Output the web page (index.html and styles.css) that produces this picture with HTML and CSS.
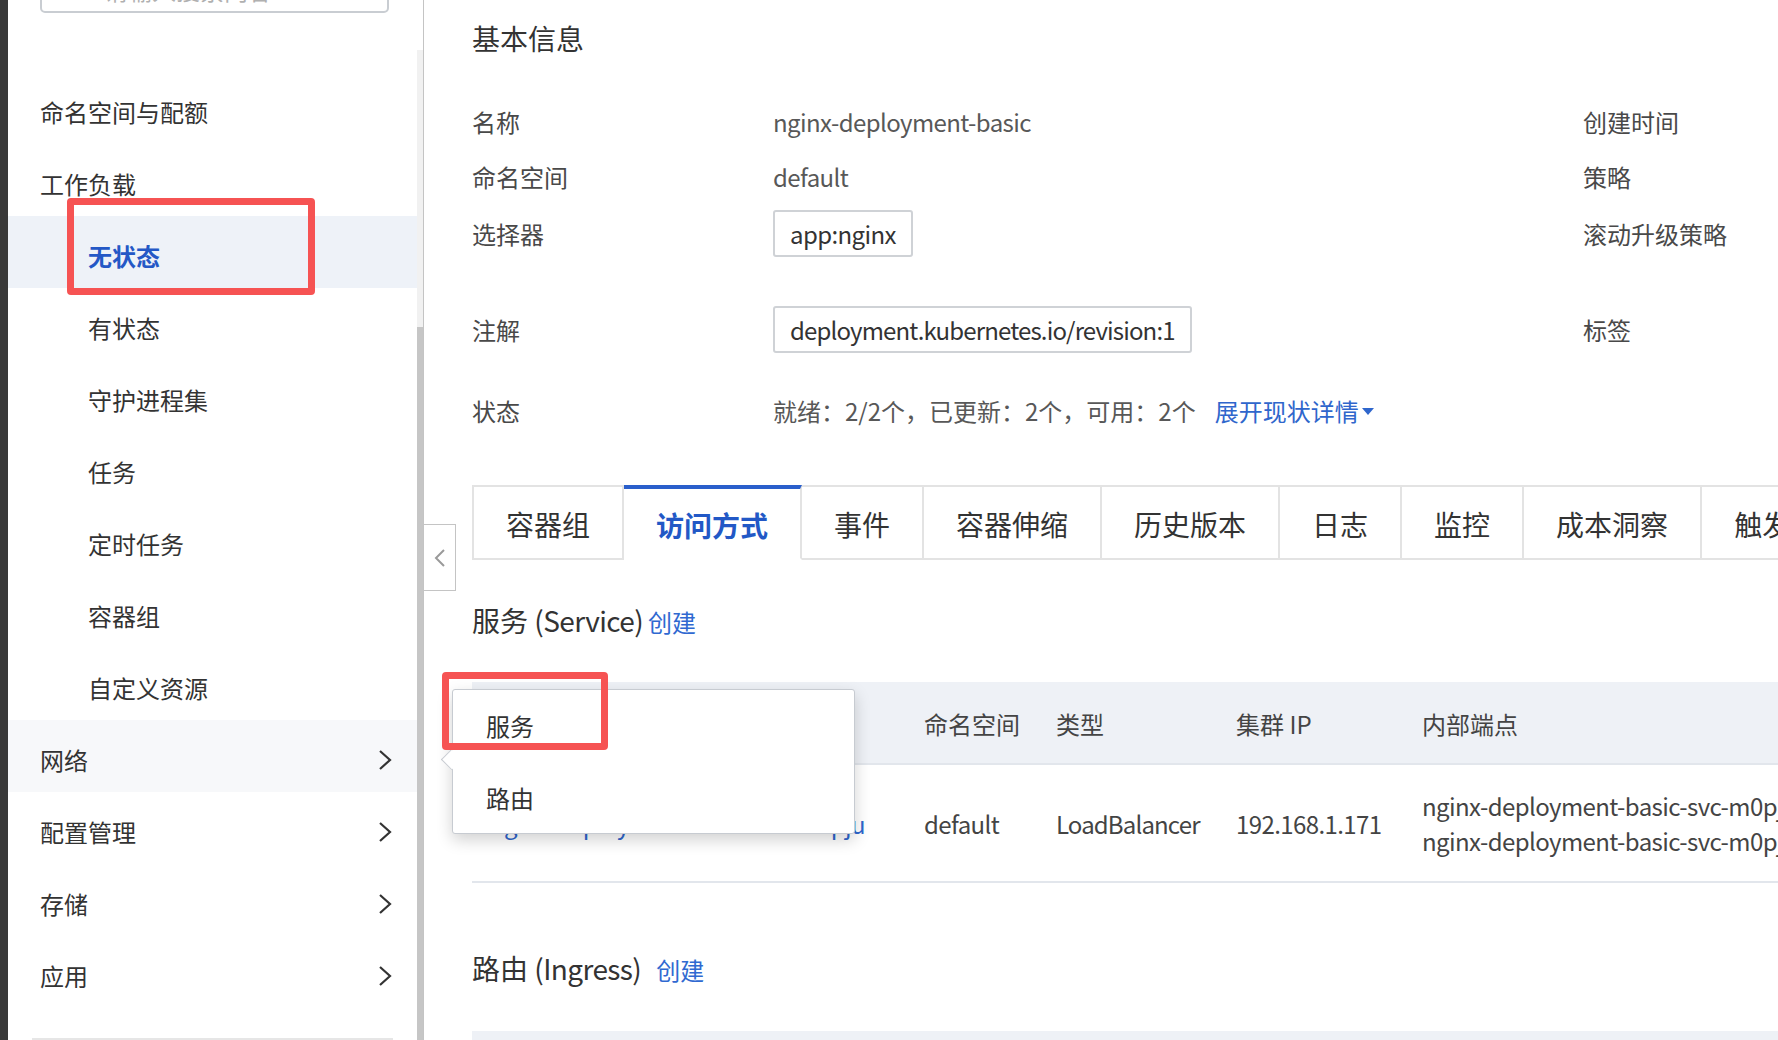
FILE: index.html
```html
<!DOCTYPE html>
<html lang="zh-CN">
<head>
<meta charset="utf-8">
<title>nginx-deployment-basic</title>
<link rel="stylesheet" href="styles.css">
</head>
<body>
<div class="app">
  <div class="edge"></div>
  <aside class="sidebar">
    <div class="search">
      <svg width="22" height="22" viewBox="0 0 22 22"><circle cx="9" cy="9" r="7" fill="none" stroke="#888" stroke-width="2"/><line x1="14" y1="14" x2="20" y2="20" stroke="#888" stroke-width="2"/></svg>
      <span>请输入搜索内容</span>
    </div>
    <nav class="menu">
      <div class="item">命名空间与配额</div>
      <div class="item">工作负载</div>
      <div class="item sub active">无状态</div>
      <div class="item sub">有状态</div>
      <div class="item sub">守护进程集</div>
      <div class="item sub">任务</div>
      <div class="item sub">定时任务</div>
      <div class="item sub">容器组</div>
      <div class="item sub">自定义资源</div>
      <div class="item hover"><span>网络</span><svg class="chev" width="14" height="22" viewBox="0 0 14 22"><polyline points="2,2 12,11 2,20" fill="none" stroke="#333" stroke-width="2.2"/></svg></div>
      <div class="item"><span>配置管理</span><svg class="chev" width="14" height="22" viewBox="0 0 14 22"><polyline points="2,2 12,11 2,20" fill="none" stroke="#333" stroke-width="2.2"/></svg></div>
      <div class="item"><span>存储</span><svg class="chev" width="14" height="22" viewBox="0 0 14 22"><polyline points="2,2 12,11 2,20" fill="none" stroke="#333" stroke-width="2.2"/></svg></div>
      <div class="item"><span>应用</span><svg class="chev" width="14" height="22" viewBox="0 0 14 22"><polyline points="2,2 12,11 2,20" fill="none" stroke="#333" stroke-width="2.2"/></svg></div>
    </nav>
    <div class="sidebar-foot"></div>
    <div class="mark mark-nav"></div>
  </aside>
  <div class="scrollbar"><div class="sb-gap"></div><div class="sb-track"></div><div class="sb-thumb"></div></div>
  <main class="main">
    <div class="collapse"><svg width="12" height="20" viewBox="0 0 12 20"><polyline points="10,2 2,10 10,18" fill="none" stroke="#9a9a9a" stroke-width="2"/></svg></div>

    <h2 class="title">基本信息</h2>
    <div class="info">
      <div class="row r1"><div class="lab">名称</div><div class="val lat">nginx-deployment-basic</div><div class="rlab">创建时间</div></div>
      <div class="row r2"><div class="lab">命名空间</div><div class="val lat">default</div><div class="rlab">策略</div></div>
      <div class="row r3"><div class="lab">选择器</div><div class="val"><span class="tag lat">app:nginx</span></div><div class="rlab">滚动升级策略</div></div>
      <div class="row r4"><div class="lab">注解</div><div class="val"><span class="tag lat lat2">deployment.kubernetes.io/revision:1</span></div><div class="rlab">标签</div></div>
      <div class="row r5"><div class="lab">状态</div><div class="val status">就绪：2/2个，已更新：2个，可用：2个<a class="expand">展开现状详情<i class="caret"></i></a></div></div>
    </div>

    <div class="tabs">
      <div class="tab">容器组</div>
      <div class="tab active">访问方式</div>
      <div class="tab">事件</div>
      <div class="tab">容器伸缩</div>
      <div class="tab">历史版本</div>
      <div class="tab">日志</div>
      <div class="tab">监控</div>
      <div class="tab">成本洞察</div>
      <div class="tab">触发器</div>
    </div>

    <div class="sec-head"><span class="sec-title">服务 <span class="lat">(Service)</span></span><a class="create">创建</a></div>
    <div class="table">
      <div class="thead">
        <div class="cell">名称</div>
        <div class="cell">命名空间</div>
        <div class="cell">类型</div>
        <div class="cell">集群 IP</div>
        <div class="cell">内部端点</div>
      </div>
      <div class="trow">
        <div class="cell link lat">nginx-deployment-basic-svc-m0pju</div>
        <div class="cell lat">default</div>
        <div class="cell lat lat2">LoadBalancer</div>
        <div class="cell lat">192.168.1.171</div>
        <div class="cell ep lat">nginx-deployment-basic-svc-m0pju.default.svc.cluster.local:80 TCP<br>nginx-deployment-basic-svc-m0pju.default.svc.cluster.local:0 TCP</div>
      </div>
    </div>

    <div class="sec-head sec-ing"><span class="sec-title">路由 <span class="lat">(Ingress)</span></span><a class="create create-ing">创建</a></div>
    <div class="table table-ing">
      <div class="thead">
        <div class="cell">名称</div>
        <div class="cell">命名空间</div>
        <div class="cell">类型</div>
        <div class="cell">规则</div>
        <div class="cell">端点</div>
      </div>
    </div>

    <div class="popup">
      <div class="arrow"></div>
      <div class="opt">服务</div>
      <div class="opt">路由</div>
    </div>
    <div class="mark mark-popup"></div>
  </main>
</div>
</body>
</html>
```

FILE: styles.css
```css
* { box-sizing: border-box; margin: 0; padding: 0; }
html, body { width: 1778px; height: 1040px; overflow: hidden; }
body {
  font-family: "Noto Sans CJK SC", "Noto Sans", sans-serif;
  color: #333;
  background: #fff;
}
a { text-decoration: none; cursor: pointer; }
.lat { letter-spacing: -0.6px; }
.lat2 { letter-spacing: -0.85px; }

.app { display: flex; height: 1040px; }
.edge { width: 8px; flex: none; background: #393939; }

/* sidebar */
.sidebar { width: 409px; flex: none; position: relative; background: #fff; }
.search {
  margin: -35px 0 0 32px;
  width: 349px;
  height: 48px;
  border: 2px solid #c9cdd2;
  border-radius: 5px;
  display: flex;
  align-items: center;
  gap: 16px;
  padding-left: 24px;
  color: #b0b0b0;
  font-size: 24px;
}
.menu { margin-top: 59px; }
.item {
  height: 72px;
  padding: 8px 25px 0 32px;
  line-height: 64px;
  font-size: 24px;
  color: #333;
  display: flex;
  justify-content: space-between;
  align-items: center;
}
.item.sub { padding-left: 80px; }
.item.active { background: #eef2f8; color: #2458c6; font-weight: 700; }
.item.hover { background: #f7f8fa; }
.chev { flex: none; }
.sidebar-foot { margin: 30px 24px 0 24px; height: 2px; background: #e6e6e6; }

/* scrollbar */
.scrollbar { width: 6px; flex: none; display: flex; flex-direction: column; }
.sb-gap { height: 50px; background: #fff; }
.sb-track { height: 277px; background: #f1f1f1; }
.sb-thumb { flex: 1; background: #c6c6c6; }

/* main */
.main {
  flex: 1;
  min-width: 0;
  position: relative;
  border-left: 1px solid #c4c4c4;
  padding: 18px 0 0 48px;
}
.collapse {
  position: absolute;
  left: -1px;
  top: 524px;
  width: 33px;
  height: 67px;
  border: 1px solid #c4c4c4;
  background: #fff;
  display: flex;
  align-items: center;
  justify-content: center;
}
.title { font-size: 28px; font-weight: 400; line-height: 40px; color: #333; }

.info { margin-top: 35px; }
.row { display: flex; align-items: center; height: 56px; font-size: 24px; white-space: nowrap; }
.row .lab { width: 301px; flex: none; color: #494949; }
.row .val { width: 810px; flex: none; color: #585858; display: flex; align-items: center; }
.row .rlab { color: #494949; }
.r2 { margin-top: -1px; }
.r3 { margin-top: 1px; }
.r4 { margin-top: 40px; }
.r5 { margin-top: 25px; }
.tag {
  display: inline-block;
  height: 47px;
  line-height: 43px;
  padding: 0 15px;
  border: 2px solid #cfd2d6;
  border-radius: 3px;
  color: #333;
}
.expand { color: #2f66cc; margin-left: 19px; display: inline-flex; align-items: center; }
.caret {
  display: inline-block;
  width: 0; height: 0;
  margin-left: 3px;
  margin-top: 3px;
  border-left: 6px solid transparent;
  border-right: 6px solid transparent;
  border-top: 7px solid #2f66cc;
}

/* tabs */
.tabs { margin-top: 47px; display: flex; height: 75px; overflow: hidden; }
.tab {
  flex: none;
  height: 75px;
  border: 2px solid #e3e3e3;
  border-left: 0;
  padding: 0 32px;
  font-size: 28px;
  line-height: 75px;
  color: #333;
}
.tab:first-child { border-left: 2px solid #e3e3e3; }
.tab.active {
  border-top: 4px solid #2a5fcb;
  border-bottom-color: #fff;
  color: #2258c6;
  font-weight: 700;
  line-height: 73px;
}

/* sections */
.sec-head { margin-top: 40px; display: flex; align-items: baseline; line-height: 40px; white-space: nowrap; }
.sec-title { font-size: 28px; color: #333; }
.create { font-size: 24px; color: #3069d1; margin-left: 5px; }
.create-ing { margin-left: 15px; }
.sec-ing { margin-top: 65px; }

.table { margin-top: 40px; overflow: hidden; }
.thead, .trow {
  display: grid;
  grid-template-columns: 434px 132px 180px 186px 1fr;
  font-size: 24px;
  align-items: center;
}
.thead { background: #eef1f6; height: 83px; padding-top: 2px; border-bottom: 2px solid #e2e6ec; color: #444; }
.trow { height: 118px; border-bottom: 2px solid #e2e6ec; color: #444; }
.cell { padding-left: 18px; white-space: nowrap; overflow: hidden; }
.link { color: #2f66cc; }
.ep { line-height: 35px; }
.table-ing { margin-top: 41px; }

/* popup */
.popup {
  position: absolute;
  left: 28px;
  top: 689px;
  width: 403px;
  height: 145px;
  background: #fff;
  border: 1px solid #c7cbd1;
  border-radius: 3px;
  box-shadow: 0 6px 16px rgba(0, 0, 0, 0.18);
}
.popup .opt { position: relative; height: 72px; line-height: 72px; padding-left: 33px; font-size: 24px; color: #333; }
.popup .arrow {
  position: absolute;
  left: -9px;
  top: 62px;
  width: 15px;
  height: 15px;
  background: #fff;
  border-left: 1px solid #c7cbd1;
  border-bottom: 1px solid #c7cbd1;
  transform: rotate(45deg);
}

/* annotation boxes */
.mark { position: absolute; border: 7px solid #f65353; border-radius: 4px; pointer-events: none; }
.mark-nav { left: 59px; top: 198px; width: 248px; height: 97px; }
.mark-popup { left: 18px; top: 672px; width: 166px; height: 78px; }
```
